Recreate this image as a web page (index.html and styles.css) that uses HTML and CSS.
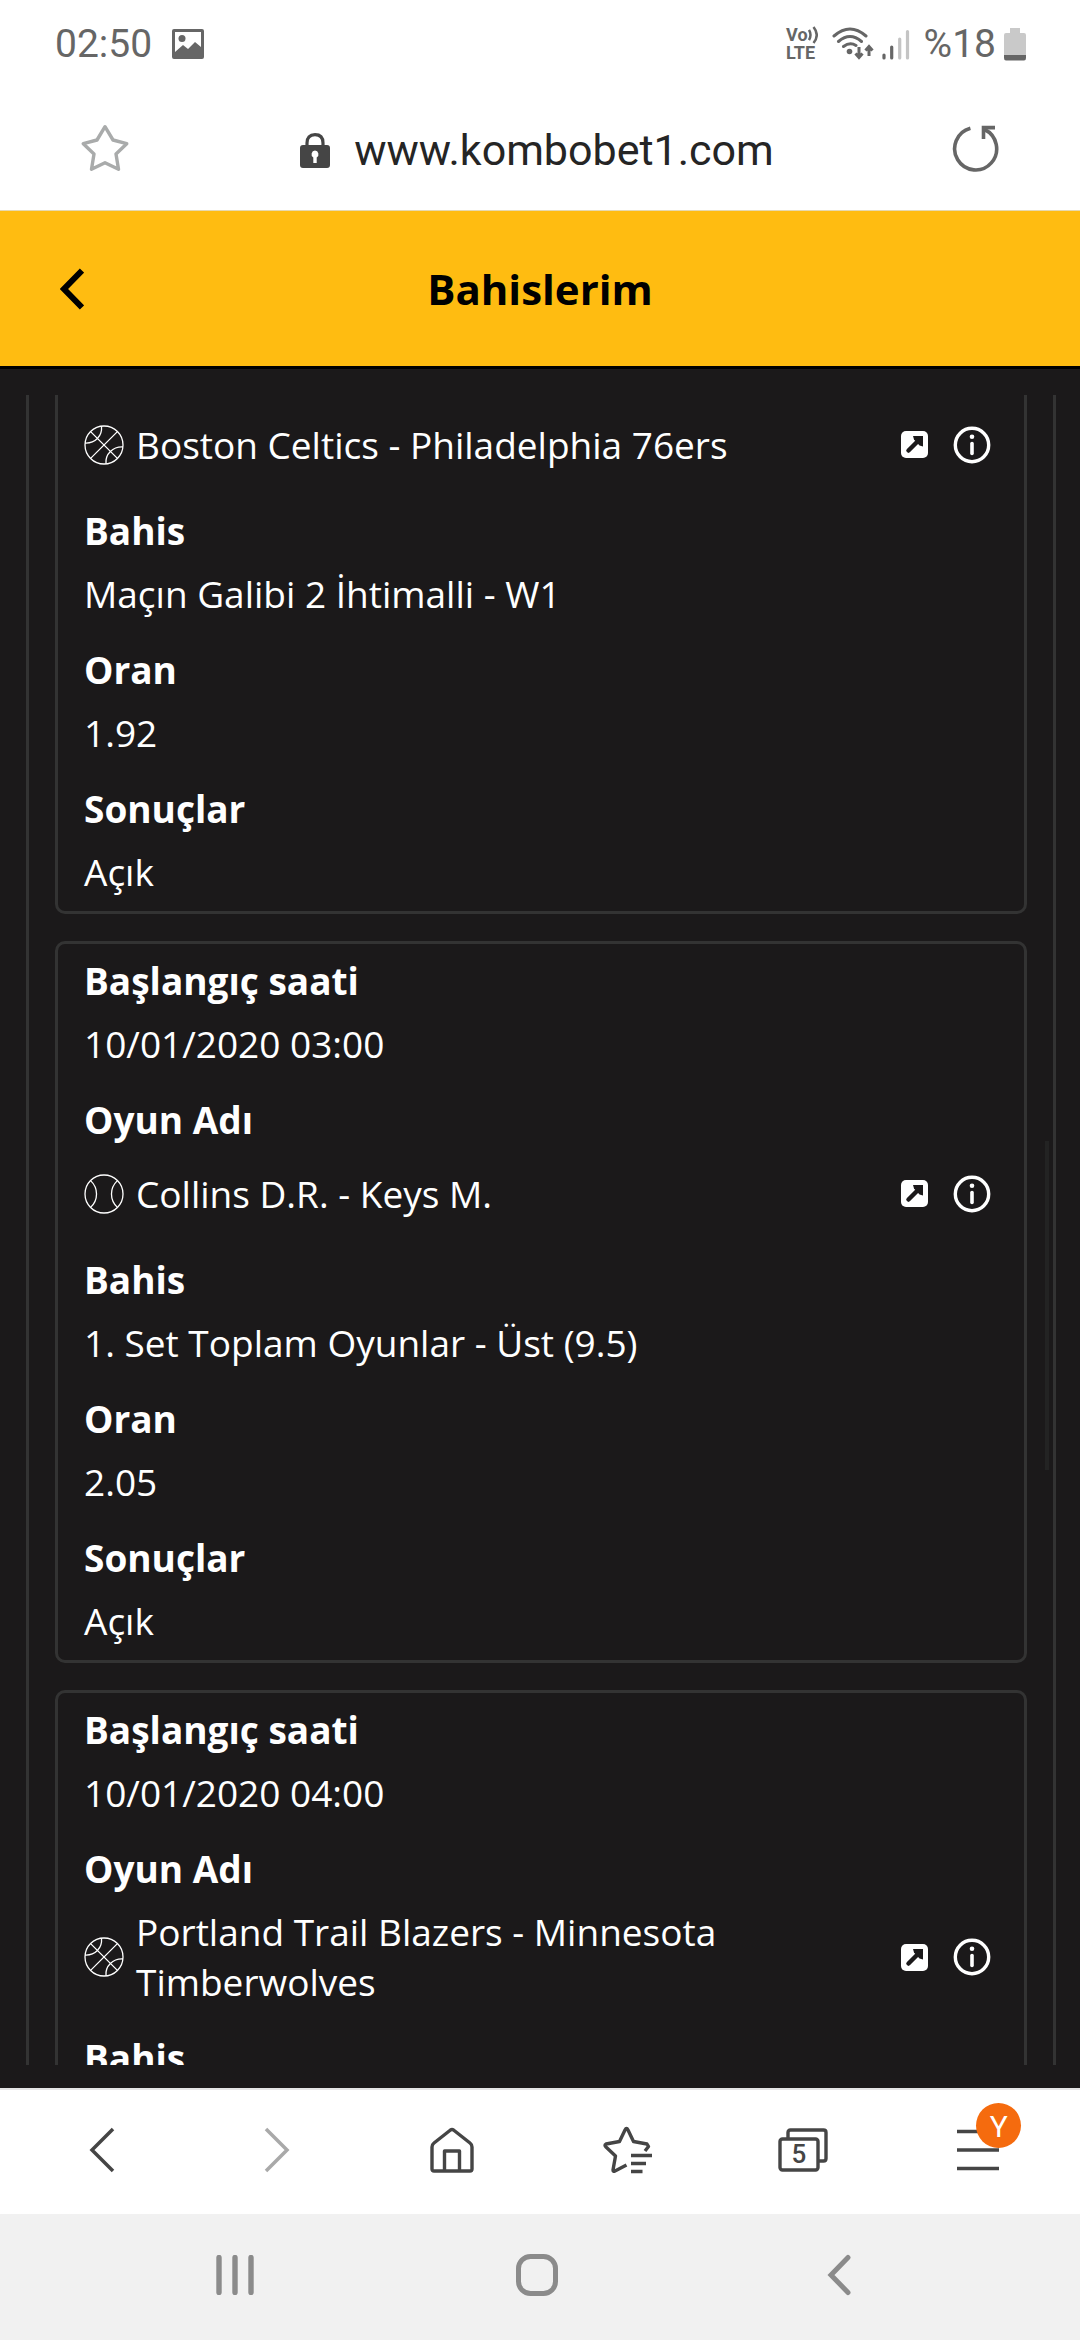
FILE: index.html
```html
<!DOCTYPE html>
<html lang="tr">
<head>
<meta charset="utf-8">
<meta name="viewport" content="width=device-width, initial-scale=1">
<title>Bahislerim</title>
<link rel="stylesheet" href="styles.css">
</head>
<body>
<svg class="defs" aria-hidden="true">
  <symbol id="basketball" viewBox="0 0 40 40">
    <g fill="none" stroke="#fff" stroke-width="1.3">
      <circle cx="20" cy="20" r="19"/>
      <path d="M6.6 6.6 33.4 33.4M33.4 6.6 6.6 33.4M1 18C11 18.500 18.500 11 17.500 1.200M39 22C29 21.500 21 29 22 38.800"/>
    </g>
  </symbol>
  <symbol id="tennis" viewBox="0 0 40 40">
    <g fill="none" stroke="#fff" stroke-width="1.300">
      <circle cx="20" cy="20" r="19"/>
      <path d="M6.600 6.600C14.500 14 14.500 26 6.600 33.400M33.400 6.600C25.500 14 25.500 26 33.400 33.400"/>
    </g>
  </symbol>
  <symbol id="open" viewBox="0 0 27 27">
    <rect width="27" height="27" rx="5" fill="#fff"/>
    <path d="M7.500 19.500 18 9" fill="none" stroke="#1b191a" stroke-width="4.500" stroke-linecap="round"/>
    <path d="M12 5H22V15.500L18.500 14.500 13 8.500Z" fill="#1b191a"/>
  </symbol>
  <symbol id="info" viewBox="0 0 38 38">
    <circle cx="19" cy="19" r="16.700" fill="none" stroke="#fff" stroke-width="3.400"/>
    <circle cx="19" cy="10.800" r="2.300" fill="#fff"/>
    <path d="M19 17.500V27.500" stroke="#fff" stroke-width="3.600" stroke-linecap="round"/>
  </symbol>
</svg>

<div class="screen">
  <div class="status">
    <span class="clock">02:50</span>
    <svg class="photo" width="32" height="30" viewBox="0 0 32 30"><path fill-rule="evenodd" fill="#666" d="M2 0H30Q32 0 32 2V28Q32 30 30 30H2Q0 30 0 28V2Q0 0 2 0ZM3 3V23L11 16 16 20 23 13 29 18V3Z"/><circle cx="10" cy="9.500" r="3.500" fill="#666"/></svg>
    <div class="signals">
      <div class="volte">
        <div class="volte-top">Vo<svg width="10" height="18" viewBox="0 0 10 18" fill="none" stroke="#666" stroke-width="2.500"><path d="M1 4Q4 9 1 14M5.500 1Q12 9 5.500 17"/></svg></div>
        <div>LTE</div>
      </div>
      <svg class="wifi" width="42" height="34" viewBox="0 0 42 34"><g fill="none" stroke="#666" stroke-width="3" stroke-linecap="round"><path d="M2 9Q18-5 34 9M6.500 14.500Q18 4.500 29.500 14.500M11.500 19.500Q18 14.500 24 18.500"/></g><circle cx="17.500" cy="24.500" r="2.800" fill="#666"/><path d="M27 20V30M23.500 26.500 27 30.500 30.500 26.500M37 29V20M33.500 23.500 37 19.500 40.500 23.500" fill="none" stroke="#666" stroke-width="3"/></svg>
      <svg class="bars" width="28" height="31" viewBox="0 0 28 31" stroke-width="3.200" stroke-linecap="round"><path d="M2 26V29M9.700 18V29" stroke="#666"/><path d="M17.700 10V29M25.500 2.500V29" stroke="#c4c4c4"/></svg>
      <span>%18</span>
      <svg class="battery" width="22" height="34" viewBox="0 0 22 34"><path d="M6 1H16V6H20Q22 6 22 8V28H0V8Q0 6 2 6H6Z" fill="#c9c9c9"/><path d="M0 28H22V31Q22 33.500 20 33.500H2Q0 33.500 0 31Z" fill="#666"/></svg>
    </div>
  </div>

  <div class="urlbar">
    <button aria-label="Yer imlerine ekle"><svg width="48" height="48" viewBox="0 0 48 48"><path d="M24 2.700 32 16 45.700 19.700 35 30 37.500 45.300 24 38.700 10.500 45.300 13 30 2.300 19.700 16 16Z" fill="none" stroke="#a9abab" stroke-width="3.400" stroke-linejoin="round"/></svg></button>
    <button class="address"><svg width="30" height="35" viewBox="0 0 30 35"><path d="M7 13V10Q7 1.700 15 1.700T23 10V13" fill="none" stroke="#454545" stroke-width="3.200"/><path fill-rule="evenodd" fill="#454545" d="M3 12H27Q30 12 30 15V32Q30 35 27 35H3Q0 35 0 32V15Q0 12 3 12ZM15 17.500A3.800 3.800 0 0 0 13.300 24.500V30H16.700V24.500A3.800 3.800 0 0 0 15 17.500Z"/></svg><span>www.kombobet1.com</span></button>
    <button aria-label="Yenile"><svg width="48" height="48" viewBox="0 0 48 48" fill="none" stroke="#666" stroke-width="3.600"><path d="M19.400 4.200A21 21.200 0 1 0 33.500 5.500"/><path d="M32.500 15V3.600H44"/></svg></button>
  </div>

  <header class="header">
    <button class="back" aria-label="Geri"><svg width="24" height="42" viewBox="0 0 24 42"><path d="M22 2.500 4 21 22 39.500" fill="none" stroke="#000" stroke-width="6"/></svg></button>
    <h1>Bahislerim</h1>
  </header>

  <main class="page">
    <div class="scroller">
      <div class="coupon">
        <dl class="card card-continued">
          <dd class="game"><svg class="ball"><use href="#basketball"/></svg><span class="name">Boston Celtics - Philadelphia 76ers</span><button aria-label="Aç"><svg class="open"><use href="#open"/></svg></button><button aria-label="Bilgi"><svg class="info"><use href="#info"/></svg></button></dd>
          <dt>Bahis</dt>
          <dd>Maçın Galibi 2 İhtimalli - W1</dd>
          <dt>Oran</dt>
          <dd>1.92</dd>
          <dt>Sonuçlar</dt>
          <dd>Açık</dd>
        </dl>
        <dl class="card">
          <dt>Başlangıç saati</dt>
          <dd>10/01/2020 03:00</dd>
          <dt>Oyun Adı</dt>
          <dd class="game"><svg class="ball"><use href="#tennis"/></svg><span class="name">Collins D.R. - Keys M.</span><button aria-label="Aç"><svg class="open"><use href="#open"/></svg></button><button aria-label="Bilgi"><svg class="info"><use href="#info"/></svg></button></dd>
          <dt>Bahis</dt>
          <dd>1. Set Toplam Oyunlar - Üst (9.5)</dd>
          <dt>Oran</dt>
          <dd>2.05</dd>
          <dt>Sonuçlar</dt>
          <dd>Açık</dd>
        </dl>
        <dl class="card">
          <dt>Başlangıç saati</dt>
          <dd>10/01/2020 04:00</dd>
          <dt>Oyun Adı</dt>
          <dd class="game"><svg class="ball"><use href="#basketball"/></svg><span class="name">Portland Trail Blazers - Minnesota Timberwolves</span><button aria-label="Aç"><svg class="open"><use href="#open"/></svg></button><button aria-label="Bilgi"><svg class="info"><use href="#info"/></svg></button></dd>
          <dt>Bahis</dt>
        </dl>
      </div>
      <div class="thumb"></div>
    </div>
  </main>

  <nav class="toolbar">
    <button aria-label="Geri"><svg width="26" height="46" viewBox="0 0 26 46"><path d="M24 2 3 23 24 44" fill="none" stroke="#454545" stroke-width="3.500"/></svg></button>
    <button aria-label="İleri"><svg width="26" height="46" viewBox="0 0 26 46"><path d="M2 2 23 23 2 44" fill="none" stroke="#a9a9a9" stroke-width="3.500"/></svg></button>
    <button aria-label="Ana sayfa"><svg width="44" height="46" viewBox="0 0 44 46" fill="none" stroke="#454545" stroke-width="3.400" stroke-linejoin="round"><path d="M2 20Q2 17.500 4 16L20.500 3Q22 2 23.500 3L40 16Q42 17.500 42 20V42Q42 44 40 44H4Q2 44 2 42Z"/><path d="M14.500 44V24H29.500V44"/></svg></button>
    <button aria-label="Yer imleri"><svg width="50" height="50" viewBox="0 0 50 50" fill="none" stroke="#454545" stroke-width="3.400"><path d="M42 26 45.500 21.500 44 19 30.500 16.500 25 5Q23.500 2 22 5L16.500 16.500 3 19Q1 20 3 22L12.500 31 10 45Q10 47 12 46L23.500 40" stroke-linejoin="round"/><path d="M28 30.500H49M28 38.500H43M28 46.500H39.500"/></svg></button>
    <button aria-label="Sekmeler" class="tabs"><svg width="50" height="44" viewBox="0 0 50 44" fill="none" stroke="#454545" stroke-width="3.400"><rect x="2" y="11" width="38" height="31" rx="2.500"/><path d="M10 11V4.500Q10 2 12.500 2H45.500Q48 2 48 4.500V30.500Q48 33 45.500 33H40"/></svg><span class="count">5</span></button>
    <button aria-label="Menü" class="menu"><svg width="42" height="42" viewBox="0 0 42 42" stroke="#454545" stroke-width="3.400"><path d="M0 2.500H42M0 21H42M0 39.500H42"/></svg><span class="badge">Y</span></button>
  </nav>

  <nav class="system">
    <button aria-label="Son uygulamalar"><svg width="38" height="40" viewBox="0 0 38 40"><path d="M3 2.500V37.500M19 2.500V37.500M35 2.500V37.500" stroke="#8b8b8b" stroke-width="5.400" stroke-linecap="round"/></svg></button>
    <button aria-label="Ana ekran"><svg width="42" height="42" viewBox="0 0 42 42"><rect x="2.500" y="2.500" width="37" height="37" rx="12" fill="none" stroke="#8b8b8b" stroke-width="5"/></svg></button>
    <button aria-label="Geri"><svg width="24" height="42" viewBox="0 0 24 42"><path d="M21 3.500 4 21 21 38.500" fill="none" stroke="#8b8b8b" stroke-width="5" stroke-linecap="round"/></svg></button>
  </nav>
</div>
</body>
</html>
```

FILE: styles.css
```css
* {
  box-sizing: border-box;
}

body {
  margin: 0;
  background: #fff;
}

button {
  display: flex;
  align-items: center;
  justify-content: center;
  padding: 0;
  border: 0;
  background: none;
  color: inherit;
  font: inherit;
}

svg {
  display: block;
  flex: none;
}

.defs {
  position: absolute;
  width: 0;
  height: 0;
}

.screen {
  display: flex;
  flex-direction: column;
  height: 100vh;
  font-family: Roboto, sans-serif;
}

/* status bar */
.status {
  display: flex;
  align-items: center;
  height: 88px;
  padding: 0 54px 0 55px;
  color: #666;
  font-size: 39px;
  line-height: 48px;
}

.photo {
  margin-left: 20px;
}

.signals {
  display: flex;
  align-items: center;
  margin-left: auto;
}

.volte {
  font-size: 18px;
  font-weight: 700;
  line-height: 18px;
}

.volte-top {
  display: flex;
}

.wifi {
  margin-left: 14px;
}

.bars {
  margin-left: 8px;
}

.signals span {
  margin: 0 8px 0 14px;
}

/* address bar */
.urlbar {
  display: flex;
  align-items: center;
  justify-content: space-between;
  height: 122px;
  padding: 0 81px 2px;
}

.address {
  gap: 24px;
  padding: 4px 6px 0 0;
  color: #252525;
  font-size: 43px;
  line-height: 52px;
}

/* site header */
.header {
  display: grid;
  grid-template-columns: 24px 1fr 24px;
  align-items: center;
  height: 159px;
  padding: 0 60px;
  border-top: 1px solid #e6d9b0;
  border-bottom: 3px solid #000;
  background: #ffbc11;
  color: #000;
}

.header h1 {
  margin: 0;
  font: 700 42px/58px "Open Sans", sans-serif;
  text-align: center;
}

/* bet list */
.page {
  display: flex;
  flex: 1;
  min-height: 0;
  padding: 26px 24px 23px 26px;
  background: #1b191a;
  color: #fff;
  font: 37px/50px "Open Sans", sans-serif;
}

.scroller {
  position: relative;
  flex: 1;
  overflow: hidden;
}

.coupon {
  padding: 0 26px;
  border: solid #333;
  border-width: 0 3px;
}

.card {
  margin: 0 0 27px;
  padding: 12px 26px 14px;
  border: 3px solid #333;
  border-radius: 10px;
}

.card-continued {
  padding-top: 14px;
  border-top: 0;
  border-radius: 0 0 10px 10px;
}

dt {
  margin-top: 26px;
  font-weight: 700;
}

dt:first-child {
  margin-top: 0;
}

dd {
  margin: 13px 0 0;
}

dd:first-child {
  margin-top: 0;
}

.game {
  display: flex;
  align-items: center;
  min-height: 71px;
}

.name {
  flex: 1;
  margin: 0 12px;
}

.ball {
  width: 40px;
  height: 40px;
}

.open {
  width: 27px;
  height: 27px;
}

.info {
  width: 38px;
  height: 38px;
  margin: 0 7px 0 25px;
}

.thumb {
  position: absolute;
  top: 746px;
  right: 7px;
  width: 4px;
  height: 329px;
  background: #232323;
}

/* browser toolbar */
.toolbar {
  display: grid;
  grid-template-columns: repeat(6, 1fr);
  height: 126px;
  padding: 0 14px 4px;
  border-top: 2px solid #e5e5e5;
  color: #454545;
}

.tabs,
.menu {
  position: relative;
}

.count {
  position: absolute;
  top: 49px;
  left: 50%;
  width: 42px;
  margin-left: -25px;
  font-size: 26px;
  font-weight: 500;
  line-height: 30px;
  text-align: center;
}

.badge {
  position: absolute;
  top: 13px;
  left: 50%;
  width: 45px;
  height: 45px;
  margin-left: -2px;
  border-radius: 50%;
  background: #f56b0e;
  color: #fff;
  font-size: 30px;
  line-height: 47px;
  text-align: center;
}

/* system navigation */
.system {
  display: grid;
  grid-template-columns: repeat(3, 1fr);
  height: 126px;
  padding: 0 90px 4px 84px;
  background: #f1f1f1;
}
```
